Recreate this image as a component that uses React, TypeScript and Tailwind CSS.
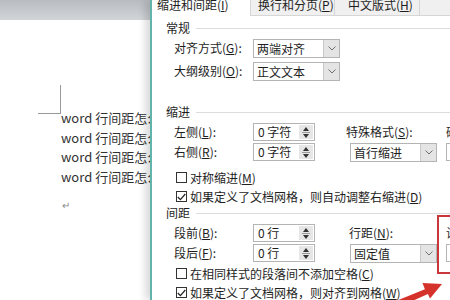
import React from "react";

const cjk = "font-['Noto_Sans_CJK_SC',sans-serif]";

function Key({ text, k }: { text: string; k: string }) {
  return (
    <span>
      {text}(<span className="underline">{k}</span>):
    </span>
  );
}

function Heading({ text, className }: { text: string; className: string }) {
  return (
    <div className={"flex items-center pl-[14px] " + className}>
      <span>{text}</span>
      <div className="ml-[6px] h-px flex-1 bg-[#dcdcdc]" />
    </div>
  );
}

function Chevron() {
  return (
    <svg width="8" height="5" viewBox="0 0 8 5">
      <path d="M0.5 0.5 L4 4 L7.5 0.5" fill="none" stroke="#6f6f6f" strokeWidth="1" />
    </svg>
  );
}

function Combo({ value, className }: { value: string; className: string }) {
  return (
    <div className={"flex h-[19px] shrink-0 items-stretch border border-[#b4b4b4] bg-white " + className}>
      <span className="flex-1 pl-[3px] leading-[17px]">{value}</span>
      <div className="flex w-[16px] items-center justify-center border-l border-[#c9c9c9] bg-[#e4e4e4]">
        <Chevron />
      </div>
    </div>
  );
}

function Spin({ value }: { value: string }) {
  return (
    <div className="flex h-[18px] w-[62px] shrink-0 items-stretch border border-[#b4b4b4] bg-white">
      <span className="flex-1 pl-[4px] leading-[16px]">{value}</span>
      <div className="my-[1px] mr-[1px] flex w-[14px] flex-col items-center justify-center gap-[1px] bg-[#e6e6e6]">
        <svg width="6" height="4" viewBox="0 0 6 4">
          <path d="M0 4 L3 0 L6 4 Z" fill="#333" />
        </svg>
        <div className="h-px w-[8px] bg-[#9a9a9a]" />
        <svg width="6" height="4" viewBox="0 0 6 4">
          <path d="M0 0 L3 4 L6 0 Z" fill="#333" />
        </svg>
      </div>
    </div>
  );
}

function Check({ checked, children, className }: { checked?: boolean; children: React.ReactNode; className?: string }) {
  return (
    <div className={"flex h-[19px] items-center pl-[24px] " + (className || "")}>
      <span className="flex h-[11px] w-[11px] shrink-0 items-center justify-center border border-[#333] bg-white">
        {checked && (
          <svg width="9" height="8" viewBox="0 0 9 8">
            <path d="M0.8 4 L3.4 6.6 L8.3 1" fill="none" stroke="#222" strokeWidth="1.2" />
          </svg>
        )}
      </span>
      <span className="ml-[3px]">{children}</span>
    </div>
  );
}

function Doc() {
  const lines = [1, 2, 3, 4];
  return (
    <div className="flex w-[150px] shrink-0 flex-col overflow-hidden bg-white">
      <div className="h-[20px] bg-gradient-to-b from-[#b8bcc1] to-[#d2d5d8]" />
      <div className="flex">
        <div className="w-[61px] shrink-0">
          <div className="ml-[38px] mt-[65px] h-[29px] w-[23px] border-b border-r border-[#9a9a9a]" />
        </div>
        <div className="mt-[88px] whitespace-nowrap text-[13px] leading-[19.7px] text-[#333]">
          {lines.map((i) => (
            <div key={i}>word 行间距怎么设置</div>
          ))}
          <div className="mt-[8px] pl-[1px] text-[10px] text-[#8a8a8a]">↵</div>
        </div>
      </div>
    </div>
  );
}

function Dialog() {
  return (
    <div className="relative z-10 flex min-w-0 flex-1 flex-col overflow-hidden border-l-2 border-[#62b3ab] bg-white text-[12px] text-[#1e1e1e] shadow-[-5px_0_7px_rgba(0,0,0,0.14)]">
      <div className="flex h-[16px] shrink-0 bg-[#f0f0f0]">
        <div className="-mt-[1px] w-[98px] shrink-0 bg-white pl-[5px] leading-[12px]">
          缩进和间距(<span className="underline">I</span>)
        </div>
        <div className="-mt-[1px] w-[85px] shrink-0 border-b border-l border-r border-[#d6d6d6] pl-[7px] leading-[12px]">
          换行和分页(<span className="underline">P</span>)
        </div>
        <div className="-mt-[1px] w-[85px] shrink-0 border-b border-r border-[#d6d6d6] pl-[13px] leading-[12px]">
          中文版式(<span className="underline">H</span>)
        </div>
        <div className="flex-1 border-b border-[#d6d6d6]" />
      </div>

      <div className="flex flex-col whitespace-nowrap">
        <Heading text="常规" className="mt-[3px] h-[18px]" />
        <div className="mt-[1px] flex h-[20px] items-center pl-[22px]">
          <div className="w-[79px] shrink-0"><Key text="对齐方式" k="G" /></div>
          <Combo value="两端对齐" className="w-[87px]" />
        </div>
        <div className="mt-[3px] flex h-[20px] items-center pl-[22px]">
          <div className="w-[79px] shrink-0"><Key text="大纲级别" k="O" /></div>
          <Combo value="正文文本" className="w-[87px]" />
        </div>

        <Heading text="缩进" className="mt-[22px] h-[18px]" />
        <div className="mt-[1px] flex h-[20px] items-center pl-[22px]">
          <div className="w-[79px] shrink-0"><Key text="左侧" k="L" /></div>
          <Spin value="0 字符" />
          <div className="w-[31px] shrink-0" />
          <div className="w-[100px] shrink-0"><Key text="特殊格式" k="S" /></div>
          <div className="shrink-0"><Key text="磅值" k="Y" /></div>
        </div>
        <div className="flex h-[20px] items-center pl-[22px]">
          <div className="w-[79px] shrink-0"><Key text="右侧" k="R" /></div>
          <Spin value="0 字符" />
          <div className="w-[35px] shrink-0" />
          <Combo value="首行缩进" className="w-[87px]" />
          <div className="ml-[9px] h-[18px] w-[60px] shrink-0 border border-[#b4b4b4] bg-white" />
        </div>

        <Check className="mt-[6px]">对称缩进(<span className="underline">M</span>)</Check>
        <Check checked>
          如果定义了文档网格，则自动调整右缩进(<span className="underline">D</span>)
        </Check>

        <Heading text="间距" className="h-[14px]" />
        <div className="mt-[3px] flex h-[20px] items-center pl-[22px]">
          <div className="w-[79px] shrink-0"><Key text="段前" k="B" /></div>
          <Spin value="0 行" />
          <div className="w-[34px] shrink-0" />
          <div className="w-[97px] shrink-0"><Key text="行距" k="N" /></div>
          <div className="shrink-0"><Key text="设置值" k="A" /></div>
        </div>
        <div className="flex h-[20px] items-center pl-[22px]">
          <div className="w-[79px] shrink-0"><Key text="段后" k="F" /></div>
          <Spin value="0 行" />
          <div className="w-[35px] shrink-0" />
          <Combo value="固定值" className="w-[87px]" />
          <div className="ml-[9px] h-[18px] w-[60px] shrink-0 border border-[#b4b4b4] bg-white" />
        </div>

        <Check className="mt-[1px]">
          在相同样式的段落间不添加空格(<span className="underline">C</span>)
        </Check>
        <Check checked>
          如果定义了文档网格，则对齐到网格(<span className="underline">W</span>)
        </Check>
      </div>
    </div>
  );
}

export default function App() {
  return (
    <div className={"relative flex h-[300px] w-[450px] overflow-hidden bg-white " + cjk}>
      <Doc />
      <Dialog />
      {/* annotation: red box + arrow */}
      <div className="absolute left-[437px] top-[215px] z-20 h-[59px] w-[30px] border-2 border-[#c8383b]" />
      <svg className="pointer-events-none absolute left-0 top-0 z-20" width="450" height="300" viewBox="0 0 450 300">
        <polygon
          points="442,284 430,298.5 427.9,294 391.5,310.4 388.5,304 424.9,289.3 422.5,283"
          fill="#d6322c"
        />
      </svg>
    </div>
  );
}
